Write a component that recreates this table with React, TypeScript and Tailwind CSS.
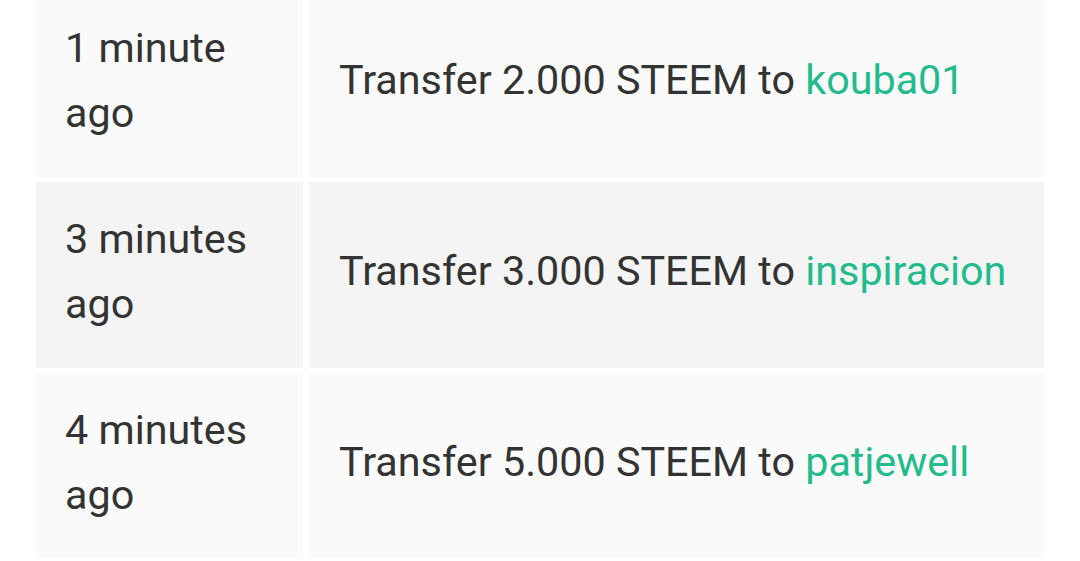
const rows = [
  { when: "1 minute ago", amount: "2.000", to: "kouba01", bg: "bg-[#fafafa]" },
  { when: "3 minutes ago", amount: "3.000", to: "inspiracion", bg: "bg-[#f4f4f4]" },
  { when: "4 minutes ago", amount: "5.000", to: "patjewell", bg: "bg-[#fafafa]" },
];

export default function App() {
  return (
    <div className="h-[561px] w-[1080px] overflow-hidden bg-white font-['Roboto',sans-serif] text-[41.3px] leading-[65px] text-[#333333]">
      <div className="ml-[36px] -mt-[9px] grid grid-cols-[267px_735px] gap-x-[6px] gap-y-[5px]">
        {rows.map((r) => (
          <div key={r.to} className="contents">
            <div className={`${r.bg} flex h-[186px] items-center px-[29px] pb-[7px]`}>
              <span className="block w-[200px]">{r.when}</span>
            </div>
            <div className={`${r.bg} flex h-[186px] items-center px-[30px] pb-[7px]`}>
              <span>
                Transfer {r.amount} STEEM to <span className="text-[#22bb8c]">{r.to}</span>
              </span>
            </div>
          </div>
        ))}
      </div>
    </div>
  );
}
